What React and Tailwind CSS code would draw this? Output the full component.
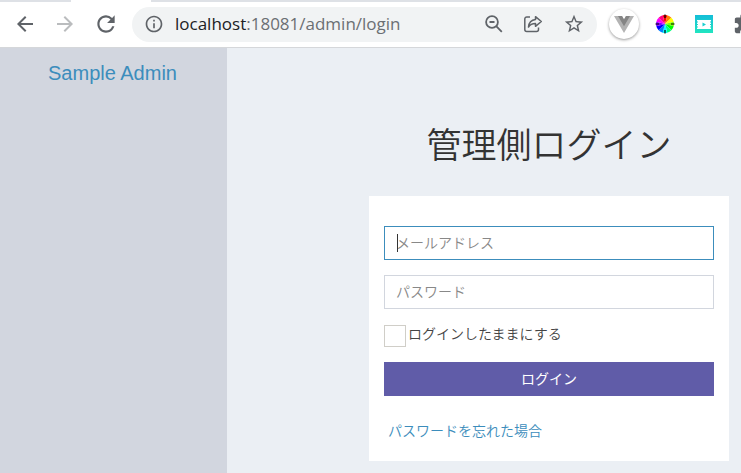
import { MdArrowBack, MdArrowForward, MdRefresh, MdInfoOutline, MdStarBorder, MdExtension } from "react-icons/md";

const wheelColors = [
  "#ff0000", "#ff8000", "#ffff00", "#80ff00", "#00ff00", "#00ff80",
  "#00ffff", "#0080ff", "#0000ff", "#8000ff", "#ff00ff", "#ff0080",
];

function wedge(index) {
  const step = (Math.PI * 2) / wheelColors.length;
  const from = -Math.PI / 2 + (index - 0.5) * step;
  const to = from + step;
  const at = (a) => `${10 + 9 * Math.cos(a)} ${10 + 9 * Math.sin(a)}`;
  return `M10 10L${at(from)}A9 9 0 0 1 ${at(to)}Z`;
}

function ZoomOutIcon() {
  return (
    <svg viewBox="0 0 18 18" className="size-[18px]" fill="none" stroke="#5f6368" strokeWidth="1.8">
      <circle cx="7" cy="7" r="5.900" />
      <path d="M4.500 7h5M11.200 11.200l5.600 5.600" />
    </svg>
  );
}

function ShareIcon() {
  return (
    <svg viewBox="0 0 20 20" className="size-5" fill="none" stroke="#5f6368" strokeWidth="1.5" strokeLinejoin="round">
      <path d="M7 3H3.800A2 2 0 0 0 1.800 5V15.500A2 2 0 0 0 3.800 17.500H13.500A2 2 0 0 0 15.500 15.500V13.500" />
      <path d="M12.500 2.700L18.300 7.500L12.500 12.300V9.500C9 9.500 7 10.500 5.500 13C5.800 9.500 8 6 12.500 5.500Z" />
    </svg>
  );
}

function VueIcon() {
  return (
    <svg viewBox="0 0 20 18" className="h-[18px] w-5">
      <path d="M0 1H8L10 4.500L12 1H20L10 18Z" fill="#b3b3b3" />
      <path d="M4 1H8L10 4.500L12 1H16L10 11.300Z" fill="#858585" />
    </svg>
  );
}

function ColorWheelIcon() {
  return (
    <svg viewBox="0 0 20 20" className="size-5">
      {wheelColors.map((color, i) => (
        <path key={color} d={wedge(i)} fill={color} />
      ))}
      <path d="M10 0.500V4M10 16V19.500M0.500 10H4M16 10H19.500" stroke="#000" strokeWidth="1.2" />
    </svg>
  );
}

function FilmIcon() {
  return (
    <svg viewBox="0 0 18 18" className="size-[18px]">
      <defs>
        <linearGradient id="film" x1="0" y1="0" x2="0" y2="1">
          <stop offset="0" stopColor="#14bdd8" />
          <stop offset="1" stopColor="#22e5c0" />
        </linearGradient>
      </defs>
      <rect width="18" height="18" fill="url(#film)" />
      <path d="M2 5H16V6.500H15V7.500H16V9H15V10H16V11.500H15V12.500H16V14H2V12.500H3V11.500H2V10H3V9H2V7.500H3V6.500H2Z" fill="#fff" />
      <path d="M7.500 7.500L11 9.500L7.500 11.500Z" fill="#1bcfcf" />
    </svg>
  );
}

function BrowserBar() {
  return (
    <header className="border-b border-[#d5d7da] bg-white font-['Open_Sans','Noto_Sans',sans-serif]">
      <div className="flex h-0.5 bg-[#dee1e6]">
        <div className="ml-[71px] w-20 bg-white" />
      </div>
      <div className="flex h-[45px] items-center overflow-hidden pb-0.5 pt-px text-[#5f6368]">
        <nav className="flex shrink-0 items-center gap-4 pl-[13px]">
          <button aria-label="戻る"><MdArrowBack className="size-6" /></button>
          <button aria-label="進む" className="text-[#babcbe]"><MdArrowForward className="size-6" /></button>
          <button aria-label="再読み込み"><MdRefresh className="size-[26px]" /></button>
        </nav>
        <div className="ml-[13px] flex h-[35px] min-w-0 flex-1 items-center rounded-full bg-[#f1f3f4] px-3">
          <MdInfoOutline className="size-5 shrink-0" />
          <p className="ml-[11px] flex-1 text-[17px] leading-6 text-[#6b6f73]">
            <span className="text-[#202124]">localhost</span>:18081/admin/login
          </p>
          <div className="flex items-center gap-5">
            <button aria-label="ズーム"><ZoomOutIcon /></button>
            <button aria-label="共有"><ShareIcon /></button>
            <button aria-label="ブックマーク"><MdStarBorder className="size-[22px]" /></button>
          </div>
        </div>
        <div className="-mr-3.5 ml-3 flex shrink-0 items-center gap-5">
          <button aria-label="Vue" className="-mr-1 flex size-[30px] items-center justify-center rounded-full bg-white shadow-[0_1px_3px_rgba(0,0,0,0.4)]">
            <VueIcon />
          </button>
          <button aria-label="カラー"><ColorWheelIcon /></button>
          <button aria-label="動画"><FilmIcon /></button>
          <button aria-label="拡張機能"><MdExtension className="size-[22px]" /></button>
        </div>
      </div>
    </header>
  );
}

export default function App() {
  return (
    <div className="flex min-h-screen flex-col bg-[#ebeff4] font-['Noto_Sans_CJK_JP',sans-serif] text-sm text-[#555]">
      <BrowserBar />
      <div className="flex flex-1">
        <aside className="w-[227px] shrink-0 bg-[#d2d6df] pr-0.5 text-center">
          <a href="#" className="block font-['Liberation_Sans',Arial,sans-serif] text-xl leading-[50px] text-[#3c8dbc]">
            Sample Admin
          </a>
        </aside>
        <main className="flex min-w-0 flex-1 justify-end pb-3 pr-3 pt-[70px]">
          <div className="w-full max-w-[360px]">
            <h1 className="mb-7 text-center text-[35px] font-[350] leading-[50px] text-[#333]">管理側ログイン</h1>
            <form className="bg-white px-[15px] pb-[21px] pt-[30px]" onSubmit={(e) => e.preventDefault()}>
              <div className="relative mb-[15px]">
                <input
                  type="email"
                  aria-label="メールアドレス"
                  placeholder="メールアドレス"
                  className="block h-[34px] w-full border border-[#3c8dbc] px-[11px] pb-0.5 font-[350] outline-none placeholder:text-[#888]"
                />
                <span className="absolute left-[13px] top-2 h-[18px] w-px bg-[#333]" />
              </div>
              <input
                type="password"
                aria-label="パスワード"
                placeholder="パスワード"
                className="mb-3.5 block h-[34px] w-full border border-[#d2d6de] px-[11px] pb-0.5 font-[350] outline-none placeholder:text-[#888]"
              />
              <label className="mb-[15px] flex items-start gap-0.5 font-[350] leading-5 text-[#444]">
                <input type="checkbox" className="mt-0.5 size-[22px] appearance-none border border-[#d0cec8] bg-white" />
                ログインしたままにする
              </label>
              <button type="submit" className="block h-[34px] w-full bg-[#605ca8] pb-0.5 text-white">ログイン</button>
              <a href="#" className="mt-6 block px-1 font-[350] leading-5 text-[#3c8dbc]">パスワードを忘れた場合</a>
            </form>
          </div>
        </main>
      </div>
    </div>
  );
}
